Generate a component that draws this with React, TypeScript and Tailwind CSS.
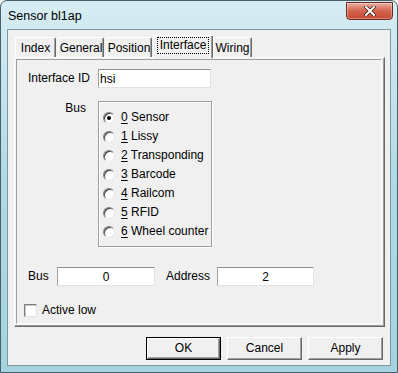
import React from 'react';

const tabs = [
  { label: 'Index', w: 'w-[41px] mr-[2px]' },
  { label: 'General', w: 'w-[46px] mr-[2px]' },
  { label: 'Position', w: 'w-[46px] mr-[1px]' },
  { label: 'Interface', w: 'w-[60px]', active: true },
  { label: 'Wiring', w: 'w-[39px]' },
];

const buses = ['Sensor', 'Lissy', 'Transponding', 'Barcode', 'Railcom', 'RFID', 'Wheel counter'];

const Radio: React.FC<{ checked?: boolean }> = ({ checked }) => (
  <span className="w-[12px] h-[12px] rounded-full bg-white border border-t-[#808080] border-l-[#808080] border-r-[#e8e8e8] border-b-[#e8e8e8] shadow-[inset_1px_1px_0_#404040] flex items-center justify-center shrink-0">
    {checked && <span className="w-[4px] h-[4px] rounded-full bg-black" />}
  </span>
);

const Edit: React.FC<{ value: string; className: string; center?: boolean }> = ({ value, className, center }) => (
  <div
    className={`${className} h-[19px] shrink-0 bg-white border border-t-[#8e8f8f] border-l-[#a3a3a3] border-r-[#e3e3e3] border-b-[#e3e3e3] flex items-center leading-none ${center ? 'justify-center' : 'pl-[1px]'}`}
  >
    {value}
  </div>
);

const Button: React.FC<{ label: string; def?: boolean }> = ({ label, def }) => (
  <div
    className={`w-[75px] h-[23px] flex items-center justify-center bg-[#f0f0f0] border ${def ? 'border-[#000]' : 'border-t-white border-l-white border-r-[#696969] border-b-[#696969]'}`}
  >
    <div className={`w-full h-full flex items-center justify-center ${def ? 'border border-t-white border-l-white border-r-[#696969] border-b-[#696969] shadow-[inset_-1px_-1px_0_#a0a0a0]' : 'shadow-[inset_-1px_-1px_0_#a0a0a0]'}`}>
      {label}
    </div>
  </div>
);

export default function App() {
  return (
    <div className="w-[398px] h-[373px] font-['Liberation_Sans',Arial,sans-serif] text-[12px] leading-[15px] whitespace-nowrap text-black bg-[#f0f0f0]">
      <div className="w-full h-full flex flex-col rounded-t-[7px] border border-[#48606b] bg-gradient-to-b from-[#d6edf3] via-[#afdae4] to-[#a4d3de] px-[6px] pb-[6px]">
        {/* Title bar */}
        <div className="h-[28px] flex items-start shrink-0">
          <div className="pl-[1px] pt-[7px] text-[12.5px] leading-[16px]">Sensor bl1ap</div>
          <div className="ml-auto mr-[-2px] mt-[1px] w-[47px] h-[18px] rounded-b-[4px] border border-[#6b2b22] bg-gradient-to-b from-[#eab0a3] via-[#d4634c] to-[#c44a31] flex items-center justify-center shadow-[inset_0_0_0_1px_rgba(255,255,255,0.35)]">
            <svg width="12" height="10" viewBox="0 0 12 10">
              <path d="M2 1 L10 9 M10 1 L2 9" stroke="#3a1a14" strokeWidth="3.4" strokeLinecap="square" />
              <path d="M2 1 L10 9 M10 1 L2 9" stroke="#ffffff" strokeWidth="2" strokeLinecap="square" />
            </svg>
          </div>
        </div>

        {/* Client area */}
        <div className="flex-1 flex flex-col bg-[#f0f0f0] border border-[#7d98a3] pl-[6px] pr-[7px] pt-[5px] pb-[5px]">
          {/* Tab strip */}
          <div className="flex items-end h-[22px] pl-[1px] shrink-0">
            {tabs.map((t) =>
              t.active ? (
                <div
                  key={t.label}
                  className={`${t.w} h-[23px] mb-[-1px] relative z-10 bg-[#f0f0f0] border-l border-t border-l-white border-t-white border-r border-r-[#696969] shadow-[inset_-1px_0_0_#a0a0a0] rounded-t-[2px] flex items-start justify-center pt-[2px]`}
                >
                  <span className="px-[2px] leading-[15px] outline outline-1 outline-dotted outline-black">{t.label}</span>
                </div>
              ) : (
                <div
                  key={t.label}
                  className={`${t.w} h-[20px] border-l border-t border-l-white border-t-white border-r border-r-[#696969] shadow-[inset_-1px_0_0_#a0a0a0] rounded-t-[2px] flex items-center justify-center pt-[1px]`}
                >
                  {t.label}
                </div>
              )
            )}
          </div>

          {/* Tab page */}
          <div className="w-[371px] h-[270px] shrink-0 border border-t-white border-l-white border-r-[#696969] border-b-[#696969] shadow-[inset_-1px_-1px_0_#a0a0a0]">
            <div className="w-full h-full p-[1px]">
              <div className="w-[366px] h-[265px] border border-t-[#a0a0a0] border-l-[#a0a0a0] border-r-white border-b-white flex flex-col">
                {/* Interface ID */}
                <div className="flex items-center mt-[9px]">
                  <div className="w-[58px] ml-[11px] text-right">Interface ID</div>
                  <Edit value="hsi" className="ml-[12px] w-[113px]" />
                </div>

                {/* Bus radio group */}
                <div className="flex items-start mt-[13px]">
                  <div className="w-[58px] ml-[11px] text-right">Bus</div>
                  <div className="ml-[12px] w-[114px] h-[146px] border border-[#a0a0a0] shadow-[inset_1px_1px_0_#fff,1px_1px_0_#fff] pt-[6px] pl-[4px]">
                    {buses.map((b, i) => (
                      <div key={b} className="h-[19px] flex items-center">
                        <Radio checked={i === 0} />
                        <span className="ml-[6px]">
                          <span className="underline underline-offset-2">{i}</span> {b}
                        </span>
                      </div>
                    ))}
                  </div>
                </div>

                {/* Bus / Address */}
                <div className="flex items-center mt-[20px]">
                  <div className="ml-[11px] w-[29px]">Bus</div>
                  <Edit value="0" className="w-[98px]" center />
                  <div className="ml-[11px] w-[51px]">Address</div>
                  <Edit value="2" className="w-[97px]" center />
                </div>

                {/* Active low */}
                <div className="flex items-center mt-[17px] ml-[7px]">
                  <span className="w-[13px] h-[13px] bg-white border border-t-[#808080] border-l-[#808080] border-r-[#e3e3e3] border-b-[#e3e3e3] shadow-[inset_1px_1px_0_#c8c8c8]" />
                  <span className="ml-[5px]">Active low</span>
                </div>
              </div>
            </div>
          </div>

          {/* Buttons */}
          <div className="flex justify-end gap-[6px] mt-[10px] shrink-0">
            <Button label="OK" def />
            <Button label="Cancel" />
            <Button label="Apply" />
          </div>
        </div>
      </div>
    </div>
  );
}
